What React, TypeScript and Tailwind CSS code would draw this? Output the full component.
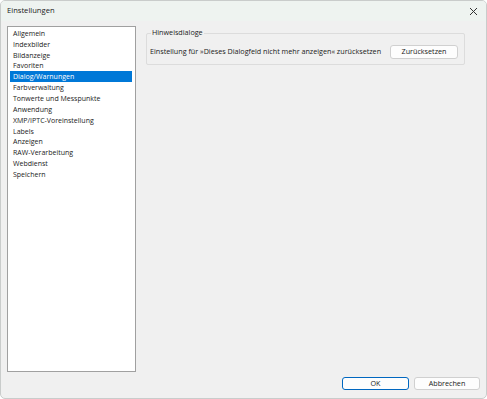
import React from 'react';

const items = [
  'Allgemein',
  'Indexbilder',
  'Bildanzeige',
  'Favoriten',
  'Dialog/Warnungen',
  'Farbverwaltung',
  'Tonwerte und Messpunkte',
  'Anwendung',
  'XMP/IPTC-Voreinstellung',
  'Labels',
  'Anzeigen',
  'RAW-Verarbeitung',
  'Webdienst',
  'Speichern',
];

const font = { fontFamily: '"Open Sans", "Noto Sans", sans-serif' };

const App: React.FC = () => {
  return (
    <div
      className="w-[487px] h-[399px] flex flex-col bg-[#f0f0f0] border border-[#c9cccb] rounded-[5px] overflow-hidden text-[#1a1a1a]"
      style={font}
    >
      <div className="h-[20px] shrink-0 flex items-center justify-between bg-[#eef3f0] pl-[6px] pr-[8px]">
        <span className="text-[7.6px] leading-none">Einstellungen</span>
        <svg width="9" height="9" viewBox="0 0 9 9" className="text-[#333]">
          <path d="M1 1 L8 8 M8 1 L1 8" stroke="currentColor" strokeWidth="1" />
        </svg>
      </div>

      <div className="flex-1 flex pt-[5px] pl-[6px] pr-[21px] gap-[10px] min-h-0">
        <div className="w-[129px] h-[346px] shrink-0 bg-white border border-[#a0a0a0] pt-[1px] pl-[2px] pr-[3px]">
          {items.map((item) => (
            <div
              key={item}
              className={
                'h-[10.85px] flex items-center pl-[3px] text-[7px] leading-none whitespace-nowrap ' +
                (item === 'Dialog/Warnungen' ? 'bg-[#0078d7] text-white' : '')
              }
            >
              {item}
            </div>
          ))}
        </div>

        <div className="flex-1 pt-[7px]">
          <div className="relative border border-[#dcdcdc] rounded-[2px] h-[32px] pl-[3px] pr-[6px] flex items-center justify-between pt-[6px]">
            <span className="absolute -top-[5px] left-[4px] bg-[#f0f0f0] px-[1px] text-[7.2px] leading-none">
              Hinweisdialoge
            </span>
            <span className="text-[7.2px] leading-none whitespace-nowrap">
              Einstellung für »Dieses Dialogfeld nicht mehr anzeigen« zurücksetzen
            </span>
            <button className="w-[68px] h-[14px] bg-[#fdfdfd] border border-[#d0d0d0] rounded-[3px] text-[7.2px] leading-none">
              Zurücksetzen
            </button>
          </div>
        </div>
      </div>

      <div className="h-[27px] shrink-0 flex items-start justify-end gap-[5px] pr-[6px] pt-[6px]">
        <button className="w-[67px] h-[13px] bg-[#fdfdfd] border border-[#0067c0] rounded-[3px] text-[7.2px] leading-none">
          OK
        </button>
        <button className="w-[66px] h-[13px] bg-[#fdfdfd] border border-[#d0d0d0] rounded-[3px] text-[7.2px] leading-none">
          Abbrechen
        </button>
      </div>
    </div>
  );
};

export default App;
